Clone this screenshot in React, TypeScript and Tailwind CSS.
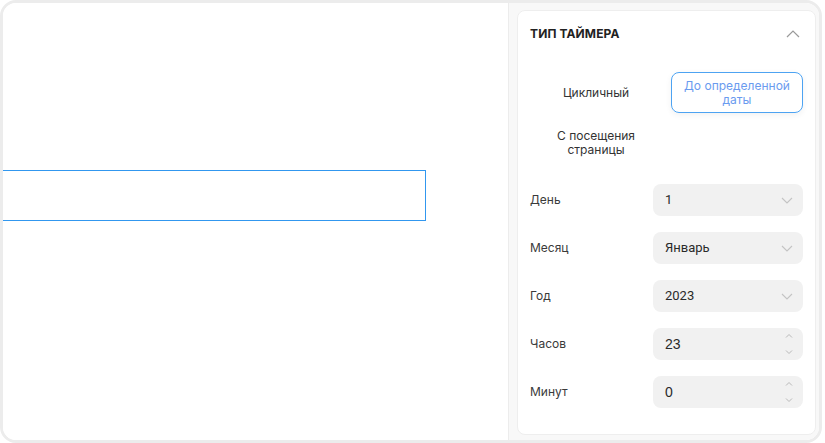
import React from 'react';

const FIELDS: { label: string; value: string; kind: 'select' | 'number' }[] = [
  { label: 'День', value: '1', kind: 'select' },
  { label: 'Месяц', value: 'Январь', kind: 'select' },
  { label: 'Год', value: '2023', kind: 'select' },
  { label: 'Часов', value: '23', kind: 'number' },
  { label: 'Минут', value: '0', kind: 'number' },
];

const ChevronDown = () => (
  <svg width="12" height="7" viewBox="0 0 12 7" fill="none" stroke="#c4c4c4" strokeWidth="1.1">
    <path d="M1 1l5 5 5-5" />
  </svg>
);

const Spinner = () => (
  <div className="flex flex-col items-center justify-between h-[22px]">
    <svg width="8" height="5" viewBox="0 0 8 5" fill="none" stroke="#b8b8b8" strokeWidth="1">
      <path d="M1 4.5l3-3 3 3" />
    </svg>
    <svg width="8" height="5" viewBox="0 0 8 5" fill="none" stroke="#b8b8b8" strokeWidth="1">
      <path d="M1 0.5l3 3 3-3" />
    </svg>
  </div>
);

export default function App() {
  return (
    <div className="w-[825px] h-[443px] bg-white" style={{ fontFamily: 'Inter, "Noto Sans", sans-serif' }}>
      <div className="w-[822px] h-[443px] rounded-[16px] border-[3px] border-[#ececec] overflow-hidden flex">
        {/* canvas */}
        <div className="w-[505px] shrink-0 bg-white flex flex-col pt-[167px]">
          <div className="w-[423px] h-[51px] border border-l-0 border-[#3197ef]" />
        </div>

        {/* side panel */}
        <div className="flex-1 border-l border-[#ececec] bg-[#f8f8f8] pl-[8px] pr-[3px] pt-[7px] pb-[5px]">
          <div className="h-full bg-white border border-[#eeeeee] rounded-[8px] px-[12px] flex flex-col">
            <div className="h-[45px] flex items-center justify-between shrink-0">
              <span className="text-[12px] font-bold text-[#222] tracking-[0.01em]">ТИП ТАЙМЕРА</span>
              <svg width="14" height="8" viewBox="0 0 14 8" fill="none" stroke="#9a9a9a" strokeWidth="1.2" className="mr-[3px]">
                <path d="M1 7l6-6 6 6" />
              </svg>
            </div>

            <div className="mt-[16px] grid grid-cols-2 gap-x-[9px] gap-y-[9px] auto-rows-[41px]">
              <div className="flex items-center justify-center text-[12px] text-[#333] text-center">Цикличный</div>
              <div className="flex items-center justify-center rounded-[8px] border border-[#4da3f2] shadow-[0_2px_6px_rgba(0,0,0,0.06)] text-[12px] leading-[14px] text-[#6a9bef] text-center">
                До определенной<br />даты
              </div>
              <div className="flex items-center justify-center text-[12px] leading-[14px] text-[#333] text-center">
                С посещения<br />страницы
              </div>
            </div>

            <div className="mt-[21px] flex flex-col gap-[16px]">
              {FIELDS.map((f) => (
                <div key={f.label} className="flex items-center justify-between h-[32px]">
                  <span className="text-[12px] text-[#3a3a3a]">{f.label}</span>
                  <div className="w-[150px] h-[32px] rounded-[8px] bg-[#f1f1f1] flex items-center justify-between pl-[12px] pr-[10px]">
                    <span
                      className="text-[#2a2a2a]"
                      style={
                        f.kind === 'number'
                          ? { fontFamily: '"Liberation Sans", Arial, sans-serif', fontSize: 14 }
                          : { fontFamily: 'Roboto, sans-serif', fontSize: 13 }
                      }
                    >
                      {f.value}
                    </span>
                    {f.kind === 'select' ? <ChevronDown /> : <Spinner />}
                  </div>
                </div>
              ))}
            </div>
          </div>
        </div>
      </div>
    </div>
  );
}
